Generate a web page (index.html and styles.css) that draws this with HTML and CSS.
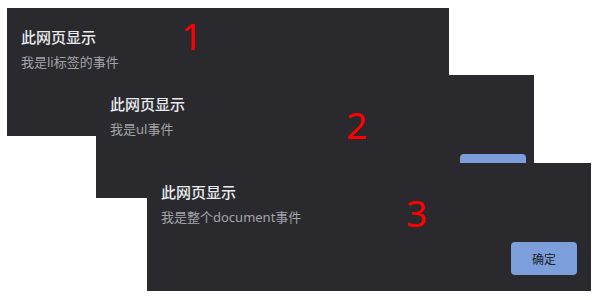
FILE: index.html
```html
<!DOCTYPE html>
<html lang="zh-CN">
<head>
<meta charset="utf-8">
<link rel="stylesheet" href="styles.css">
</head>
<body>
<div class="canvas">
  <div class="dialog d1">
    <div class="title">此网页显示</div>
    <div class="msg">我是li标签的事件</div>
    <div class="actions"><button class="ok">确定</button></div>
  </div>
  <div class="dialog d2">
    <div class="title">此网页显示</div>
    <div class="msg">我是ul事件</div>
    <div class="actions"><button class="ok">确定</button></div>
  </div>
  <div class="dialog d3">
    <div class="title">此网页显示</div>
    <div class="msg">我是整个document事件</div>
    <div class="actions"><button class="ok">确定</button></div>
  </div>
  <span class="num n1">1</span>
  <span class="num n2">2</span>
  <span class="num n3">3</span>
</div>
</body>
</html>
```
FILE: styles.css
```css
html, body {
  margin: 0;
  padding: 0;
  background: #ffffff;
}
.canvas {
  position: relative;
  width: 600px;
  height: 300px;
  overflow: hidden;
  font-family: "Noto Sans", "Noto Sans CJK SC", sans-serif;
}
.dialog {
  position: absolute;
  box-sizing: border-box;
  background: #2a2a2e;
  padding: 19px 14px 0 14px;
  display: flex;
  flex-direction: column;
}
.d1 { left: 7px; top: 8px; width: 442px; height: 128px; }
.d2 { left: 96px; top: 75px; width: 438px; height: 123px; padding-right: 8px; }
.d3 { left: 147px; top: 163px; width: 444px; height: 128px; }
.title {
  font-family: "Noto Sans CJK SC", sans-serif;
  font-size: 15px;
  line-height: 20px;
  font-weight: 500;
  color: #e8eaed;
}
.msg {
  margin-top: 6px;
  font-family: "Noto Sans", "Noto Sans CJK SC", sans-serif;
  font-size: 13px;
  line-height: 18px;
  color: #a2a5aa;
}
.actions {
  margin-top: 16px;
  display: flex;
  justify-content: flex-end;
}
.ok {
  width: 66px;
  height: 33px;
  border: none;
  border-radius: 4px;
  background: #7c9fdc;
  color: #202124;
  font-family: "Noto Sans CJK SC", sans-serif;
  font-size: 12px;
  padding: 0;
}
.num {
  position: absolute;
  font-family: "Noto Sans", sans-serif;
  font-size: 37px;
  line-height: 37px;
  color: #ff0000;
}
.n1 { left: 181px; top: 17px; }
.n2 { left: 346px; top: 106px; }
.n3 { left: 406px; top: 194px; }
```
